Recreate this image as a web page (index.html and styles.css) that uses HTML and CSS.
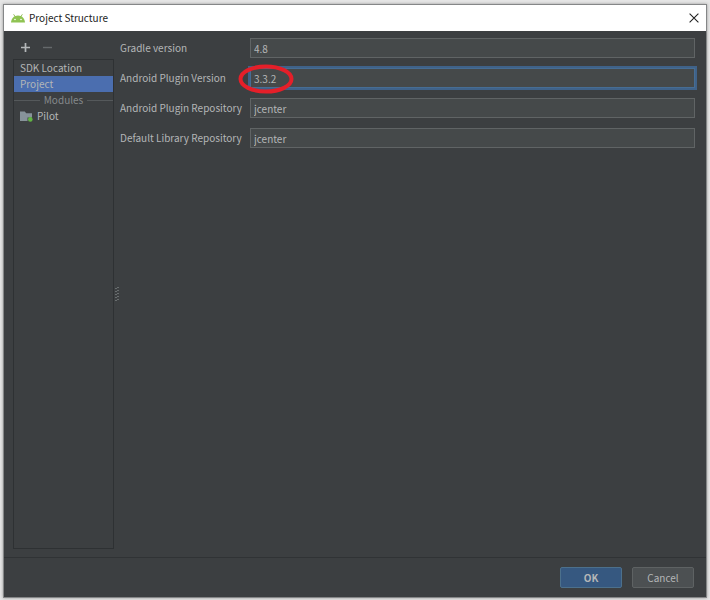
FILE: index.html
```html
<!DOCTYPE html>
<html lang="en">
<head>
<meta charset="utf-8">
<meta name="viewport" content="width=device-width, initial-scale=1">
<title>Project Structure</title>
<link rel="stylesheet" href="styles.css">
</head>
<body>
<main class="window">
  <header class="titlebar">
    <svg class="logo" width="14" height="9" viewBox="0 0 14 9" aria-hidden="true">
      <path d="M2.600.3 4.300 2.800M11.400.3 9.700 2.800" stroke="#97c160" stroke-width="1"/>
      <path d="M0 8.500C.3 4.200 3 1.400 7 1.400s6.700 2.800 7 7.100z" fill="#8fc352"/>
      <circle cx="4" cy="5.500" r=".8" fill="#fff"/><circle cx="10" cy="5.500" r=".8" fill="#fff"/>
    </svg>
    <h1 class="title">Project Structure</h1>
    <button class="close" type="button" aria-label="Close">
      <svg width="10" height="10" viewBox="0 0 10 10"><path d="M.6.6 9.400 9.400M9.400.6.6 9.400" stroke="#222" stroke-width="1.100"/></svg>
    </button>
  </header>
  <div class="content">
    <aside class="sidebar">
      <div class="toolbar">
        <button class="tool" type="button" aria-label="Add">
          <svg width="9" height="9" viewBox="0 0 9 9"><path d="M4.500 0v9M0 4.500h9" stroke="#b4b7b9" stroke-width="1.700"/></svg>
        </button>
        <button class="tool" type="button" aria-label="Remove" disabled>
          <svg width="9" height="9" viewBox="0 0 9 9"><path d="M0 4.500h9" stroke="#65696b" stroke-width="1.400"/></svg>
        </button>
      </div>
      <nav class="list">
        <a class="item" href="#sdk">SDK Location</a>
        <a class="item selected" href="#project" aria-current="page">Project</a>
        <div class="group">Modules</div>
        <a class="item module" href="#pilot">
          <svg width="13" height="11" viewBox="0 0 13 11" aria-hidden="true">
            <path d="M0 .5h4.800l1.400 1.700H12v4.300H7.500V10H0z" fill="#87939a"/>
            <circle cx="10.300" cy="8.400" r="2.300" fill="#62b543"/>
          </svg>
          Pilot
        </a>
      </nav>
    </aside>
    <div class="splitter">
      <svg width="4" height="14" viewBox="0 0 4 14" aria-hidden="true">
        <path d="M2 .5h2M0 1.500h2M2 3.500h2M0 4.500h2M2 6.500h2M0 7.500h2M2 9.500h2M0 10.500h2M2 12.500h2M0 13.500h2" stroke="#74787a" stroke-width=".8"/>
      </svg>
    </div>
    <form class="form" id="settings">
      <label for="gradle">Gradle version</label>
      <input id="gradle" type="text" value="4.8">
      <label for="plugin">Android Plugin Version</label>
      <div class="marked">
        <input class="focused" id="plugin" type="text" value="3.3.2">
        <svg class="ring" width="56" height="32" viewBox="0 0 56 32" aria-hidden="true"><ellipse cx="28" cy="16" rx="25.500" ry="12.500" fill="none" stroke="#e51f29" stroke-width="4"/></svg>
      </div>
      <label for="plugin-repo">Android Plugin Repository</label>
      <input id="plugin-repo" type="text" value="jcenter">
      <label for="library-repo">Default Library Repository</label>
      <input id="library-repo" type="text" value="jcenter">
    </form>
  </div>
  <footer class="footer">
    <button class="button primary" type="submit" form="settings">OK</button>
    <button class="button" type="button">Cancel</button>
  </footer>
</main>
</body>
</html>
```
FILE: styles.css
```css
* { box-sizing: border-box; }
body {
  margin: 0;
  padding: 4px 3px 2px;
  background: #e6e6e6;
  font-family: "Noto Sans CJK JP", "Noto Sans", sans-serif;
  font-size: 10px;
  line-height: 16px;
  color: #b4b6b7;
}
input, button { font: inherit; color: inherit; }
svg { display: block; flex: none; }
.window {
  display: flex;
  flex-direction: column;
  min-height: calc(100vh - 6px);
  border: 1px solid #858788;
  background: #3c3f41;
  box-shadow: 0 0 3px #999;
}
.titlebar {
  display: flex;
  align-items: center;
  gap: 4px;
  height: 26px;
  padding: 0 7px;
  background: #fff;
  color: #222;
}
.title { flex: 1; margin: 0; font-size: 10px; font-weight: 400; }
.close, .tool { padding: 0; border: 0; background: none; }
.content { flex: 1; display: flex; padding: 7px 11px 8px 9px; }
.sidebar { display: flex; flex-direction: column; width: 101px; }
.toolbar { display: flex; gap: 13px; height: 21px; padding: 5px 8px; }
.tool { height: 9px; }
.list { flex: 1; border: 1px solid #2e3133; }
.item {
  display: flex;
  align-items: center;
  gap: 4px;
  height: 16px;
  padding: 0 6px;
  color: inherit;
  text-decoration: none;
}
.selected { background: #4b6eaf; }
.group { display: flex; align-items: center; gap: 4px; height: 16px; color: #85898b; }
.group::before, .group::after { content: ""; flex: 1; height: 1px; background: #55595b; }
.splitter { display: flex; align-items: center; width: 6px; padding-left: 1px; }
.form {
  flex: 1;
  display: grid;
  grid-template-columns: 120px 1fr;
  grid-auto-rows: 20px;
  align-content: start;
  align-items: center;
  gap: 10px;
}
label { white-space: nowrap; }
input {
  display: block;
  width: 100%;
  height: 20px;
  padding: 0 3px;
  border: 1px solid #606465;
  border-radius: 0;
  background: #45494a;
  outline: none;
}
.marked { position: relative; }
.focused { border-color: #466d94; box-shadow: 0 0 0 2px #3f6289; }
.ring { position: absolute; left: -12px; top: -5px; }
.footer {
  display: flex;
  justify-content: flex-end;
  gap: 10px;
  padding: 9px 12px;
  border-top: 1px solid #303335;
}
.button {
  width: 62px;
  height: 21px;
  padding: 0;
  border: 1px solid #5e6263;
  border-radius: 2px;
  background: #4c5052;
}
.primary { border-color: #4c708c; background: #365880; font-weight: 700; }
```
